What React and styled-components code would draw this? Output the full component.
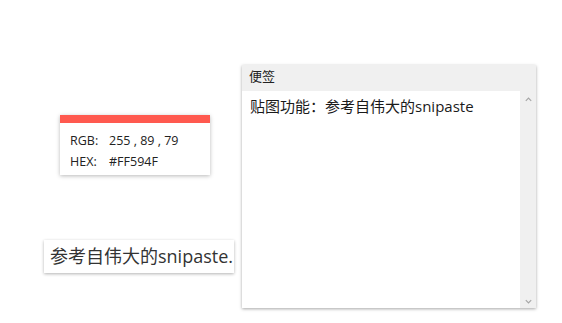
import React from 'react';
import styled, { createGlobalStyle } from 'styled-components';

const GlobalStyle = createGlobalStyle`
  html, body {
    margin: 0;
    padding: 0;
    background: #ffffff;
  }
  body {
    font-family: "Open Sans", "Noto Sans CJK SC", sans-serif;
    color: #1a1a1a;
  }
`;

const Desktop = styled.div`
  position: relative;
  width: 562px;
  height: 323px;
  overflow: hidden;
  background: #ffffff;
`;

/* floating windows: their place on the canvas is the content */
const Floating = styled.div`
  position: absolute;
  left: ${(p) => p.$x}px;
  top: ${(p) => p.$y}px;
  width: ${(p) => p.$w}px;
  height: ${(p) => p.$h}px;
  box-sizing: border-box;
  background: #ffffff;
  box-shadow: 0 1px 4px rgba(0, 0, 0, 0.28);
`;

const ColorCard = styled(Floating)`
  display: flex;
  flex-direction: column;
`;

const ColorBar = styled.div`
  height: 8px;
  background: ${(p) => p.$color};
`;

const ColorInfo = styled.div`
  display: grid;
  grid-template-columns: 39px auto;
  row-gap: 4px;
  padding: 9px 0 0 10px;
  font-size: 12.5px;
  line-height: 17px;
  color: #222;
`;

const Note = styled(Floating)`
  display: flex;
  flex-direction: column;
  box-shadow: 0 1px 3px rgba(0, 0, 0, 0.35);
`;

const NoteTitle = styled.div`
  height: 26px;
  background: #f0f0f0;
  font-size: 13px;
  line-height: 22px;
  padding-left: 7px;
  color: #222;
`;

const NoteBody = styled.div`
  flex: 1;
  display: flex;
  min-height: 0;
`;

const NoteText = styled.div`
  flex: 1;
  padding: 4px 0 0 8px;
  font-size: 15px;
  line-height: 22px;
  color: #1a1a1a;
`;

const ScrollBar = styled.div`
  width: 16px;
  background: #f0f0f0;
  display: flex;
  flex-direction: column;
  justify-content: space-between;
  align-items: center;
  padding: 4px 0 2px;
`;

const Arrow = styled.svg`
  width: 9px;
  height: 9px;
  display: block;
`;

const Snippet = styled(Floating)`
  overflow: hidden;
  white-space: nowrap;
  font-size: 18px;
  line-height: 33px;
  padding-left: 6px;
  color: #333;
  box-shadow: 0 1px 3px rgba(0, 0, 0, 0.3);
`;

const Chevron = ({ up }) => (
  <Arrow viewBox="0 0 10 10">
    <path
      d={up ? 'M2 6.5 L5 3.5 L8 6.5' : 'M2 3.5 L5 6.5 L8 3.5'}
      fill="none"
      stroke="#a6a6a6"
      strokeWidth="1.3"
    />
  </Arrow>
);

const App = () => {
  return (
    <>
      <GlobalStyle />
      <Desktop>
        <ColorCard $x={60} $y={115} $w={150} $h={60}>
          <ColorBar $color="#FF594F" />
          <ColorInfo>
            <span>RGB:</span>
            <span>255 , 89 , 79</span>
            <span>HEX:</span>
            <span>#FF594F</span>
          </ColorInfo>
        </ColorCard>

        <Note $x={242} $y={65} $w={294} $h={243}>
          <NoteTitle>便签</NoteTitle>
          <NoteBody>
            <NoteText>贴图功能：参考自伟大的snipaste</NoteText>
            <ScrollBar>
              <Chevron up />
              <Chevron />
            </ScrollBar>
          </NoteBody>
        </Note>

        <Snippet $x={44} $y={240} $w={190} $h={33}>
          参考自伟大的snipaste.
        </Snippet>
      </Desktop>
    </>
  );
};

export default App;
